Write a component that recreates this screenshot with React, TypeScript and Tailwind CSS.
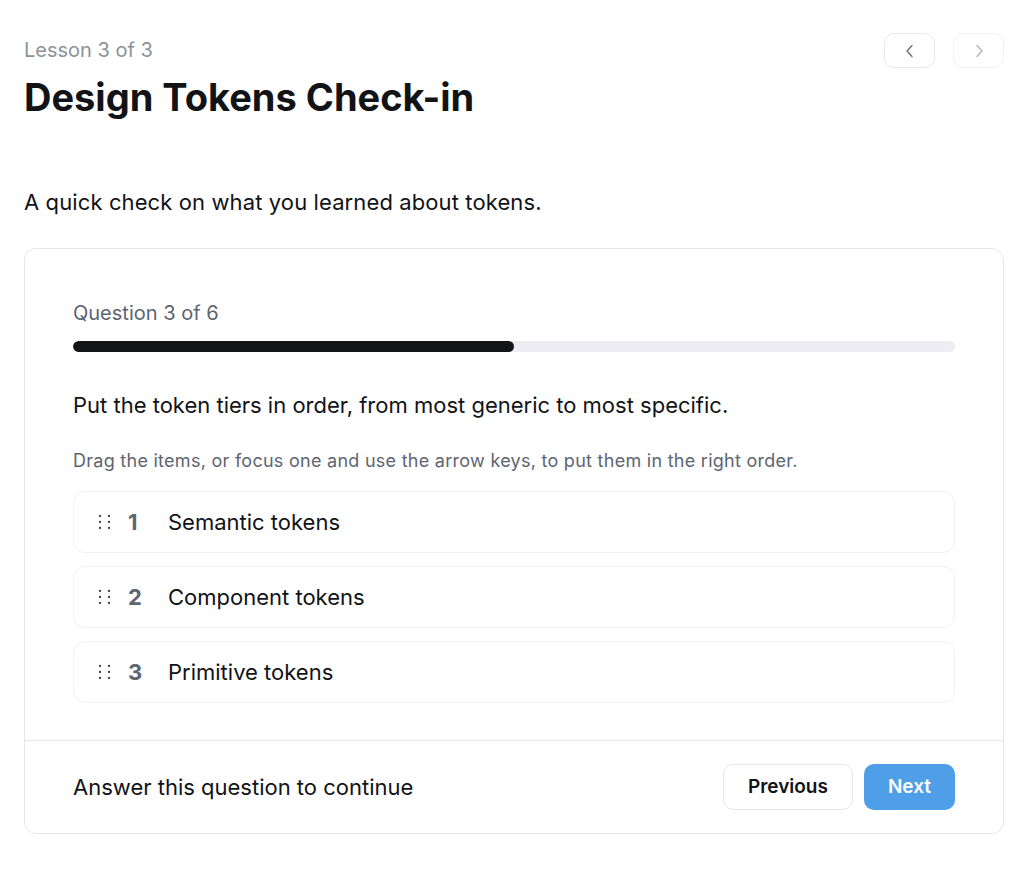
import React from "react";

function Grip() {
  const dots = [
    [2, 2], [11, 2],
    [2, 8], [11, 8],
    [2, 14], [11, 14],
  ];
  return (
    <svg width="13" height="16" viewBox="0 0 13 16" className="shrink-0">
      {dots.map(([x, y], i) => (
        <circle key={i} cx={x} cy={y} r="1.15" fill="#3f444b" />
      ))}
    </svg>
  );
}

function Chevron({ dir, color }: { dir: "left" | "right"; color: string }) {
  return (
    <svg width="10" height="14" viewBox="0 0 10 14" fill="none">
      <path
        d={dir === "left" ? "M7 1.5 L2 7 L7 12.5" : "M3 1.5 L8 7 L3 12.5"}
        stroke={color}
        strokeWidth="1.4"
        strokeLinecap="round"
        strokeLinejoin="round"
      />
    </svg>
  );
}

const items = ["Semantic tokens", "Component tokens", "Primitive tokens"];

export default function App() {
  return (
    <div
      className="bg-white pb-10 pl-6 pr-5 pt-[33px] text-[#111317]"
      style={{ fontFamily: "Inter, 'Noto Sans', sans-serif" }}
    >
      <div className="flex items-start justify-between">
        <div>
          <div className="mt-[3px] text-[20px] leading-7 text-[#8b929b]">Lesson 3 of 3</div>
          <h1 className="mt-[13px] text-[38px] font-bold leading-10">Design Tokens Check-in</h1>
        </div>
        <div className="flex gap-[18px]">
          <button className="flex h-[35px] w-[51px] items-center justify-center rounded-[10px] border border-[#e6e8eb] bg-white">
            <Chevron dir="left" color="#6b7078" />
          </button>
          <button className="flex h-[35px] w-[51px] items-center justify-center rounded-[10px] border border-[#eef0f2] bg-white">
            <Chevron dir="right" color="#b4b8be" />
          </button>
        </div>
      </div>

      <p className="mt-[71px] text-[22px] leading-7 tracking-[0.005em]">A quick check on what you learned about tokens.</p>

      <div className="mt-8 rounded-xl border border-[#e4e6ea] bg-white">
        <div className="px-12 pb-[37px] pt-[50px]">
          <div className="text-[20px] leading-7 text-[#5d6571]">Question 3 of 6</div>
          <div className="mt-[14px] h-[11px] w-full overflow-hidden rounded-full bg-[#ececf2]">
            <div className="h-full w-1/2 rounded-full bg-[#121416]" />
          </div>
          <div className="mt-[39px] text-[22px] leading-7">
            Put the token tiers in order, from most generic to most specific.
          </div>
          <div className="mt-[30px] text-[18px] leading-6 tracking-[0.015em] text-[#5d6571]">
            Drag the items, or focus one and use the arrow keys, to put them in the right order.
          </div>
          <div className="mt-[18px] flex flex-col gap-[13px]">
            {items.map((label, i) => (
              <div
                key={label}
                tabIndex={0}
                className="flex h-[62px] items-center rounded-xl border border-[#eff0f2] bg-white pl-6 outline-none"
              >
                <Grip />
                <span className="ml-[17px] w-[40px] text-[22px] font-bold text-[#5d6571]">{i + 1}</span>
                <span className="text-[22px]">{label}</span>
              </div>
            ))}
          </div>
        </div>
        <div className="flex items-center justify-between border-t border-[#e4e6ea] px-12 py-[23px]">
          <span className="text-[22px] leading-7">Answer this question to continue</span>
          <div className="flex gap-[11px]">
            <button className="h-[46px] rounded-[10px] border border-[#e4e6ea] bg-white px-6 text-[19px] font-semibold text-[#111317]">
              Previous
            </button>
            <button className="h-[46px] rounded-[10px] bg-[#4e9ee8] px-6 text-[19px] font-semibold text-white">
              Next
            </button>
          </div>
        </div>
      </div>
    </div>
  );
}
